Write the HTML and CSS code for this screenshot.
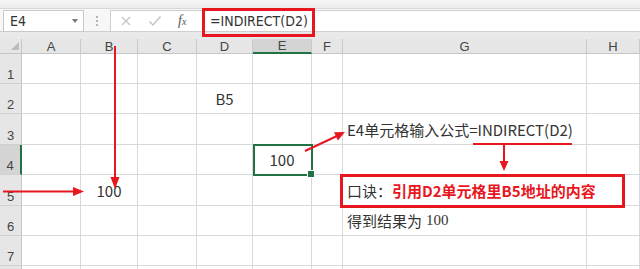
FILE: index.html
```html
<!DOCTYPE html>
<html lang="zh-CN">
<head>
<meta charset="utf-8">
<title>INDIRECT</title>
<link rel="stylesheet" href="styles.css">
</head>
<body>
<div class="app">
  <div class="ribbon-edge"></div>
  <div class="formula-bar">
    <div class="name-box"><span class="name">E4</span><span class="caret"></span></div>
    <div class="grip"></div>
    <div class="formula-field">
      <div class="fx-buttons">
        <svg class="btn" width="12" height="12" viewBox="0 0 12 12"><path d="M2 2 L10 10 M10 2 L2 10" stroke="#c4c4c4" stroke-width="1.3" fill="none"/></svg>
        <svg class="btn" width="14" height="12" viewBox="0 0 14 12"><path d="M1.5 6.5 L5 10 L12.5 1.5" stroke="#c4c4c4" stroke-width="1.4" fill="none"/></svg>
        <span class="fx">f<span class="fx-sub">x</span></span>
      </div>
      <div class="formula-input">=INDIRECT(D2)</div>
    </div>
  </div>

  <div class="sheet">
    <div class="corner"><span class="tri"></span></div>
    <div class="ch">A</div><div class="ch">B</div><div class="ch">C</div><div class="ch">D</div><div class="ch sel">E</div><div class="ch">F</div><div class="ch">G</div><div class="ch">H</div>

    <div class="rh">1</div>
    <div class="c"></div><div class="c"></div><div class="c"></div><div class="c"></div><div class="c"></div><div class="c"></div><div class="c"></div><div class="c"></div>

    <div class="rh">2</div>
    <div class="c"></div><div class="c"></div><div class="c"></div><div class="c">B5</div><div class="c"></div><div class="c"></div><div class="c"></div><div class="c"></div>

    <div class="rh">3</div>
    <div class="c"></div><div class="c"></div><div class="c"></div><div class="c"></div><div class="c"></div><div class="c"></div><div class="c left">E4单元格输入公式=INDIRECT(D2)</div><div class="c"></div>

    <div class="rh sel">4</div>
    <div class="c"></div><div class="c"></div><div class="c"></div><div class="c"></div><div class="c active">100</div><div class="c"></div><div class="c"></div><div class="c"></div>

    <div class="rh">5</div>
    <div class="c"></div><div class="c">100</div><div class="c"></div><div class="c"></div><div class="c"></div><div class="c"></div><div class="c left span2">口诀：<span class="hl">引用D2单元格里B5地址的内容</span></div>

    <div class="rh">6</div>
    <div class="c"></div><div class="c"></div><div class="c"></div><div class="c"></div><div class="c"></div><div class="c"></div><div class="c left">得到结果为 <span class="serif">100</span></div><div class="c"></div>

    <div class="rh">7</div>
    <div class="c"></div><div class="c"></div><div class="c"></div><div class="c"></div><div class="c"></div><div class="c"></div><div class="c"></div><div class="c"></div>

    <div class="rh"></div>
    <div class="c"></div><div class="c"></div><div class="c"></div><div class="c"></div><div class="c"></div><div class="c"></div><div class="c"></div><div class="c"></div>
  </div>

  <div class="mark mark-formula"></div>
  <div class="mark mark-note"></div>

  <svg class="arrows" width="640" height="269" viewBox="0 0 640 269">
    <g stroke="#e8161e" stroke-width="2" fill="none">
      <line x1="115" y1="46" x2="115" y2="179"/>
      <line x1="3" y1="191.5" x2="75" y2="191.5"/>
      <line x1="305" y1="151" x2="337" y2="136"/>
      <line x1="473" y1="144" x2="572" y2="144"/>
      <line x1="504" y1="144" x2="504" y2="162"/>
    </g>
    <g fill="#e8161e">
      <polygon points="110.5,177 119.5,177 115,189"/>
      <polygon points="73,187 73,196 84,191.5"/>
      <polygon points="345,132 337.9,140.4 334,132.2"/>
      <polygon points="499.5,161 508.5,161 504,171"/>
    </g>
  </svg>
</div>
</body>
</html>
```

FILE: styles.css
```css
* { box-sizing: border-box; }
html, body { margin: 0; padding: 0; }
body {
  width: 640px;
  height: 269px;
  overflow: hidden;
  background: #fff;
  font-family: "Noto Sans CJK SC", "Noto Sans", sans-serif;
}
.app {
  position: relative;
  width: 640px;
  height: 269px;
  overflow: hidden;
  background: #e9e9e9;
}
.ribbon-edge {
  height: 9px;
  background: linear-gradient(#f6f6f6, #ededed);
  border-bottom: 1px solid #d8d8d8;
}
.formula-bar {
  height: 23px;
  display: flex;
  padding: 1px 0 0 3px;
  background: #f7f7f7;
  border-bottom: 1px solid #cfcfcf;
}
.name-box {
  width: 81px;
  height: 22px;
  background: #fff;
  border: 1px solid #c9c9c9;
  display: flex;
  align-items: center;
  justify-content: space-between;
  padding: 0 5px 0 6px;
}
.name {
  font-family: "Liberation Sans Narrow", "DejaVu Sans Condensed", "Liberation Sans", sans-serif;
  font-size: 14px;
  color: #333;
}
.caret {
  width: 0;
  height: 0;
  border-left: 3px solid transparent;
  border-right: 3px solid transparent;
  border-top: 4px solid #777;
}
.grip {
  width: 26px;
  height: 22px;
  display: flex;
  justify-content: center;
  align-items: center;
}
.grip::before {
  content: "";
  width: 0;
  height: 10px;
  border-left: 2px dotted #b5b5b5;
}
.formula-field {
  flex: 1;
  height: 22px;
  display: flex;
  background: #fff;
  border: 1px solid #cfcfcf;
  border-right: none;
}
.fx-buttons {
  width: 92px;
  display: flex;
  align-items: center;
  gap: 16px;
  padding-left: 9px;
}
.fx {
  font-family: "Liberation Serif", serif;
  font-style: italic;
  font-size: 14px;
  color: #555;
}
.fx-sub { font-size: 10px; }
.formula-input {
  flex: 1;
  display: flex;
  align-items: center;
  padding-left: 7px;
  font-family: "Liberation Sans Narrow", "DejaVu Sans Condensed", "Liberation Sans", sans-serif;
  font-size: 14px;
  color: #333;
}
.sheet {
  margin-top: 7px;
  display: grid;
  grid-template-columns: 22px 59px 57px 59px 56px 59px 31px 244px 53px;
  grid-template-rows: 15px 30px 30px 31px 30px 31px 30px 30px 30px;
}
.corner {
  background: #e6e6e6;
  border-right: 1px solid #c6c6c6;
  border-bottom: 1px solid #c6c6c6;
  display: flex;
  justify-content: flex-end;
  align-items: flex-end;
}
.tri {
  width: 0;
  height: 0;
  border-left: 8px solid transparent;
  border-bottom: 8px solid #bcbcbc;
  margin: 0 2px 3px 0;
}
.ch {
  background: #e6e6e6;
  border-right: 1px solid #cacaca;
  border-bottom: 1px solid #c6c6c6;
  display: flex;
  align-items: center;
  justify-content: center;
  font-family: "Liberation Sans", sans-serif;
  font-size: 13px;
  color: #444;
}
.ch.sel {
  background: #d4d4d4;
  border-bottom: 2px solid #217346;
}
.rh {
  background: #e6e6e6;
  border-right: 1px solid #c6c6c6;
  border-bottom: 1px solid #d0d0d0;
  display: flex;
  align-items: flex-end;
  justify-content: center;
  padding-bottom: 1px;
  font-family: "Liberation Sans", sans-serif;
  font-size: 13px;
  line-height: 14px;
  color: #444;
}
.rh.sel {
  background: #d4d4d4;
  border-right: 2px solid #217346;
}
.c {
  background: #fff;
  border-right: 1px solid #d9d9d9;
  border-bottom: 1px solid #d9d9d9;
  display: flex;
  align-items: center;
  justify-content: center;
  font-size: 15px;
  color: #333;
  white-space: nowrap;
}
.c.left {
  justify-content: flex-start;
  padding-left: 4px;
}
.c.span2 { grid-column: span 2; }
.c.active { position: relative; }
.c.active::after {
  content: "";
  position: absolute;
  top: -1px;
  left: 0;
  right: -2px;
  bottom: -2px;
  border: 2px solid #217346;
}
.c.active::before {
  content: "";
  position: absolute;
  right: -4px;
  bottom: -4px;
  width: 6px;
  height: 6px;
  background: #217346;
  border: 1px solid #fff;
  z-index: 2;
}
.hl {
  color: #e8161e;
  font-weight: bold;
}
.serif {
  font-family: "Liberation Serif", serif;
  margin-left: 4px;
}
.mark {
  position: absolute;
  border: 3px solid #e8161e;
}
.mark-formula {
  left: 202px;
  top: 8px;
  width: 113px;
  height: 29px;
}
.mark-note {
  left: 340px;
  top: 174px;
  width: 285px;
  height: 34px;
}
.arrows {
  position: absolute;
  left: 0;
  top: 0;
}
```
